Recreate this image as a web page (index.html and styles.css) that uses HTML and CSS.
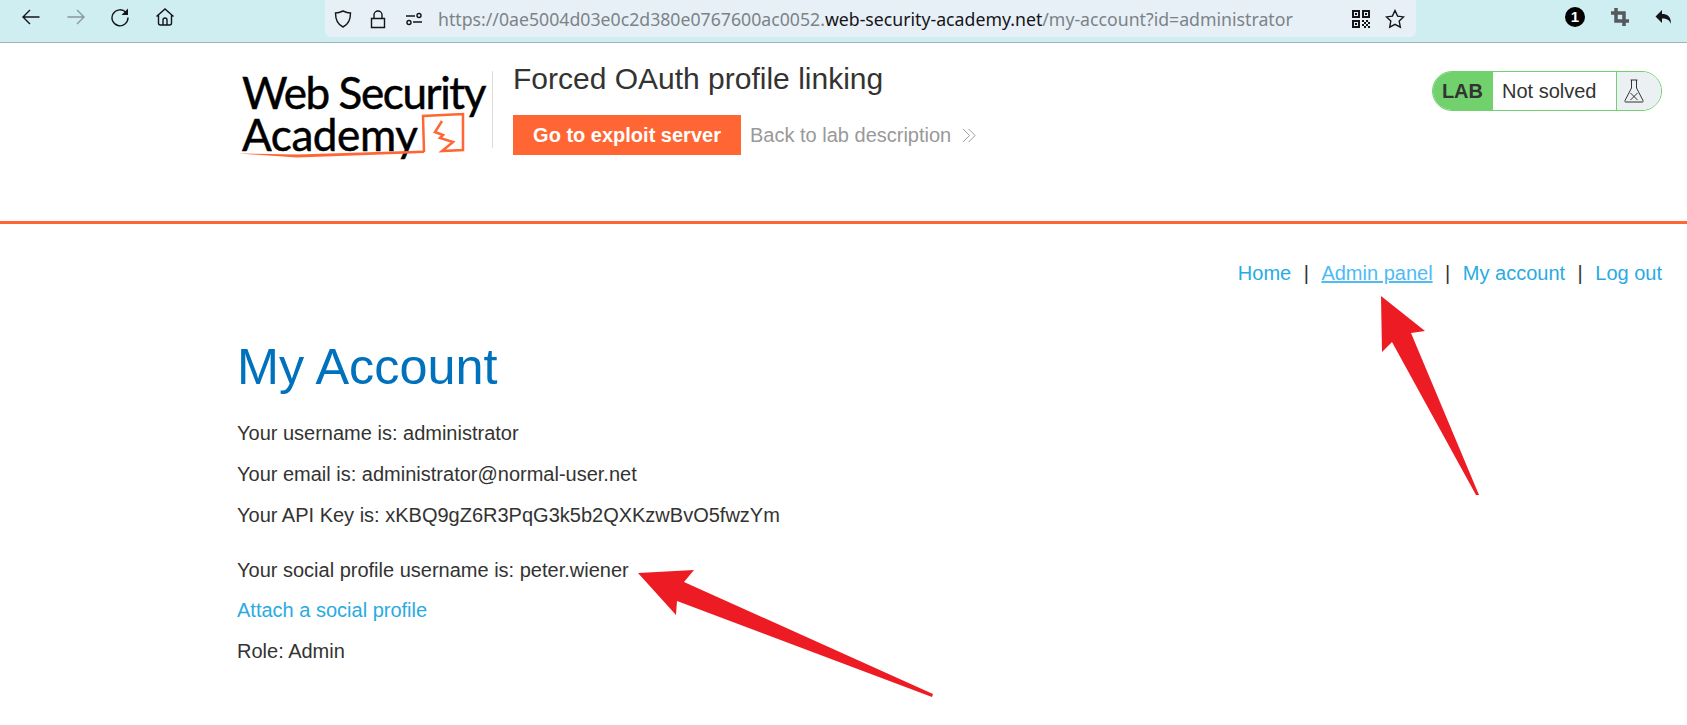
FILE: index.html
```html
<!DOCTYPE html>
<html lang="en">
<head>
    <meta charset="utf-8">
    <title>Forced OAuth profile linking</title>
    <link rel="stylesheet" href="styles.css">
</head>
<body>
    <div class="toolbar">
        <div class="nav-icons">
            <svg class="icon" viewBox="0 0 20 20"><path d="M18.500 10H2M9 3 2 10l7 7"/></svg>
            <svg class="icon dim" viewBox="0 0 20 20"><path d="M1.500 10H18M11 3l7 7-7 7"/></svg>
            <svg class="icon" viewBox="0 0 20 20"><path d="M16 5.500A8 8 0 1 0 18 10.500"/><path class="solid" d="M18 1.500V8h-6.500z"/></svg>
            <svg class="icon" viewBox="0 0 20 20"><path d="M1.500 9.500 10 2l8.500 7.500M3.500 8v8a2 2 0 0 0 2 2h9a2 2 0 0 0 2-2V8M8 18v-5a2 2 0 0 1 4 0v5"/></svg>
        </div>
        <div class="urlbar">
            <svg class="icon" viewBox="0 0 20 20"><path d="M10 2c3 1.500 5 2 7.500 2 0 6-1 11-7.500 14C3.500 15 2.500 10 2.500 4 5 4 7 3.500 10 2z"/></svg>
            <svg class="icon lock" viewBox="0 0 20 20"><path d="M3.500 9.500h13v9h-13zM6 9.500V6a4 4 0 0 1 8 0v3.500"/></svg>
            <svg class="icon prefs" viewBox="0 0 20 20"><path d="M2 7h9M9 13h9"/><circle cx="15" cy="6.500" r="2"/><circle cx="5" cy="13.500" r="2"/></svg>
            <div class="url">https://0ae5004d03e0c2d380e0767600ac0052.<b>web-security-academy.net</b>/my-account?id=administrator</div>
            <svg class="icon qr" viewBox="0 0 18 18"><path class="solid" d="M0 0h8v8H0zM2 2v4h4V2zM10 0h8v8h-8zM12 2v4h4V2zM0 10h8v8H0zM2 12v4h4v-4zM3 3h2v2H3zM13 3h2v2h-2zM3 13h2v2H3zM10 10h2v2h-2zM14 10h2v2h-2zM12 12h2v2h-2zM16 12h2v2h-2zM10 14h2v2h-2zM14 14h2v2h-2zM12 16h2v2h-2zM16 16h2v2h-2z"/></svg>
            <svg class="icon star" viewBox="0 0 20 20"><path d="M10 1.500l2.600 5.600 6 .8-4.400 4.200 1.100 6.100L10 15.300l-5.300 2.900 1.100-6.100L1.400 7.900l6-.8z"/></svg>
        </div>
        <div class="ext-icons">
            <span class="count">1</span>
            <svg class="icon crop" viewBox="0 0 18 18"><path d="M5 0v13h13M0 5h13v13"/></svg>
            <svg class="icon undo" viewBox="0 0 18 18"><path class="solid" d="M7 2v4c5 0 9 2 9 10-1.500-4-4-5.500-9-5.500V15L.5 8.500z"/></svg>
        </div>
    </div>

    <header class="lab-header">
        <div class="logo">
            <div class="logo-text">Web Security</div>
            <div class="logo-text second">Academy</div>
            <svg class="logo-mark" viewBox="0 0 256 90">
                <path class="under" d="M1 83.500 60 84.500 187 80.500v2.500L60 87.500z"/>
                <path d="M187 82 186 46l40-2v36l-21 1 11-9-13-4 3-3-8-3 7-11"/>
            </svg>
        </div>
        <div class="lab-title">
            <h2>Forced OAuth profile linking</h2>
            <div class="lab-links">
                <a class="btn-exploit">Go to exploit server</a>
                <a class="back-link">Back to lab description</a>
                <svg class="chevrons" viewBox="0 0 16 16"><path d="M1 1l7 7-7 7M7 1l7 7-7 7"/></svg>
            </div>
        </div>
        <div class="lab-status">
            <span class="status-lab">LAB</span>
            <span class="status-text">Not solved</span>
            <span class="status-icon">
                <svg viewBox="0 0 20 24"><path d="M6.500 1h7M7.500 1v8L1 21.500c-.5 1 0 1.500 1 1.500h16c1 0 1.500-.5 1-1.500L12.500 9V1M6.500 14l7 7M13.500 14l-7 7"/></svg>
            </span>
        </div>
    </header>

    <main class="content">
        <nav class="top-links">
            <a>Home</a><span>|</span><a class="hover">Admin panel</a><span>|</span><a>My account</a><span>|</span><a>Log out</a>
        </nav>
        <h1>My Account</h1>
        <p>Your username is: administrator</p>
        <p>Your email is: administrator@normal-user.net</p>
        <p>Your API Key is: xKBQ9gZ6R3PqG3k5b2QXKzwBvO5fwzYm</p>
        <p class="social">Your social profile username is: peter.wiener</p>
        <p class="attach"><a>Attach a social profile</a></p>
        <p>Role: Admin</p>
    </main>

    <!-- red arrows drawn over the page -->
    <svg class="arrows" viewBox="0 0 1687 725">
        <polygon points="1381,296 1425,331 1411,333 1479,495 1476,495 1392,342 1382,352"/>
        <polygon points="638,573 694,570 684,582 933,694 932,697 677,601 676,615"/>
    </svg>
</body>
</html>
```

FILE: styles.css
```css
body {
    margin: 0;
    height: 725px;
    overflow: hidden;
    position: relative;
    background: #fff;
    color: #333332;
    font-family: "Liberation Sans", Arial, sans-serif;
    font-size: 20px;
}
a {
    color: #29abe2;
}

/* browser bar */
.toolbar {
    display: flex;
    height: 42px;
    background: #cfeef2;
    border-bottom: 1px solid #a4b3b8;
}
.icon {
    width: 20px;
    height: 20px;
    fill: none;
    stroke: #15141a;
    stroke-width: 1.400;
    flex: none;
}
.icon .solid {
    fill: #15141a;
    stroke: none;
}
.icon.dim {
    stroke: #8b979b;
}
.nav-icons {
    width: 325px;
    display: flex;
    align-items: center;
    gap: 24.500px;
    padding: 0 0 8px 21px;
    box-sizing: border-box;
}
.urlbar {
    width: 1091px;
    height: 37px;
    display: flex;
    align-items: center;
    padding: 0 8px;
    box-sizing: border-box;
    background: #e7f0f6;
    border-radius: 0 0 6px 6px;
}
.urlbar .lock {
    margin-left: 15px;
}
.urlbar .prefs {
    margin-left: 16px;
}
.url {
    margin-left: 14px;
    width: 914px;
    flex: none;
    font-family: "Noto Sans", sans-serif;
    font-size: 17.700px;
    color: #7c8388;
    white-space: nowrap;
}
.url b {
    font-weight: 400;
    color: #15141a;
}
.urlbar .qr {
    width: 18px;
    height: 18px;
}
.urlbar .star {
    margin-left: 15px;
}
.ext-icons {
    display: flex;
    align-items: center;
    padding: 0 0 8px 149px;
}
.count {
    width: 20px;
    height: 20px;
    border-radius: 50%;
    background: #000;
    color: #fff;
    font-size: 15px;
    font-weight: 700;
    line-height: 20px;
    text-align: center;
}
.icon.crop {
    width: 18px;
    height: 18px;
    margin-left: 26px;
    stroke: #55585c;
    stroke-width: 3.500;
}
.icon.undo {
    width: 18px;
    height: 18px;
    margin-left: 26px;
}

/* lab header */
.lab-header {
    height: 181px;
    box-sizing: border-box;
    display: flex;
    padding: 28px 25px 0 237px;
    border-bottom: 3px solid #ff6633;
}
.logo {
    position: relative;
    width: 255px;
    height: 84px;
}
.logo-text {
    padding-left: 5px;
    font-family: "Lato", sans-serif;
    font-size: 44px;
    line-height: 42px;
    letter-spacing: -1.400px;
    color: #000;
    white-space: nowrap;
    -webkit-text-stroke: 0.500px #000;
}
.logo-text.second {
    letter-spacing: -0.400px;
}
.logo-mark {
    position: absolute;
    left: 0;
    top: -1px;
    width: 256px;
    height: 90px;
    fill: none;
    stroke: #ff6633;
    stroke-width: 2.500;
}
.logo-mark .under {
    fill: #ff6633;
    stroke: none;
}
.lab-title {
    border-left: 1px solid #dcdcdc;
    padding-left: 20px;
    height: 77px;
}
h2 {
    margin: -12px 0 0;
    font-size: 30px;
    font-weight: 400;
    line-height: 40px;
}
.lab-links {
    display: flex;
    align-items: center;
    margin-top: 16px;
}
.btn-exploit {
    width: 228px;
    height: 40px;
    background: #ff6633;
    color: #fff;
    font-weight: 700;
    line-height: 40px;
    text-align: center;
}
.back-link {
    margin-left: 9px;
    color: #999;
}
.chevrons {
    width: 15px;
    height: 15px;
    margin-left: 11px;
    fill: none;
    stroke: #999;
}
.lab-status {
    margin-left: auto;
    width: 230px;
    height: 40px;
    box-sizing: border-box;
    display: flex;
    line-height: 38px;
    border: 1px solid #70d16d;
    border-radius: 20px;
    overflow: hidden;
}
.status-lab {
    width: 60px;
    background: #70d16d;
    font-weight: 700;
    text-align: right;
    padding-right: 10px;
    box-sizing: border-box;
}
.status-text {
    width: 123px;
    padding-left: 9px;
    box-sizing: border-box;
}
.status-icon {
    flex: 1;
    display: flex;
    align-items: center;
    padding-left: 7px;
    background: #ebf0f2;
    border-left: 1px solid #70d16d;
}
.status-icon svg {
    width: 20px;
    height: 24px;
    fill: none;
    stroke: #333332;
}

/* page body */
.content {
    padding: 0 25px 0 237px;
}
.top-links {
    display: flex;
    justify-content: flex-end;
    gap: 12.500px;
    margin-top: 37px;
    line-height: 24px;
}
.top-links .hover {
    color: #4dbbf5;
    text-decoration: underline;
}
h1 {
    margin: 52px 0 0;
    color: #0071bc;
    font-size: 50.400px;
    font-weight: 400;
    line-height: 60px;
}
p {
    margin: 0;
    padding-top: 17px;
    line-height: 24px;
}
h1 + p {
    padding-top: 24px;
}
p.social {
    padding-top: 31px;
}
p.attach {
    padding-top: 16px;
}
.arrows {
    position: absolute;
    left: 0;
    top: 0;
    width: 1687px;
    height: 725px;
    fill: #ed1c24;
}
```
